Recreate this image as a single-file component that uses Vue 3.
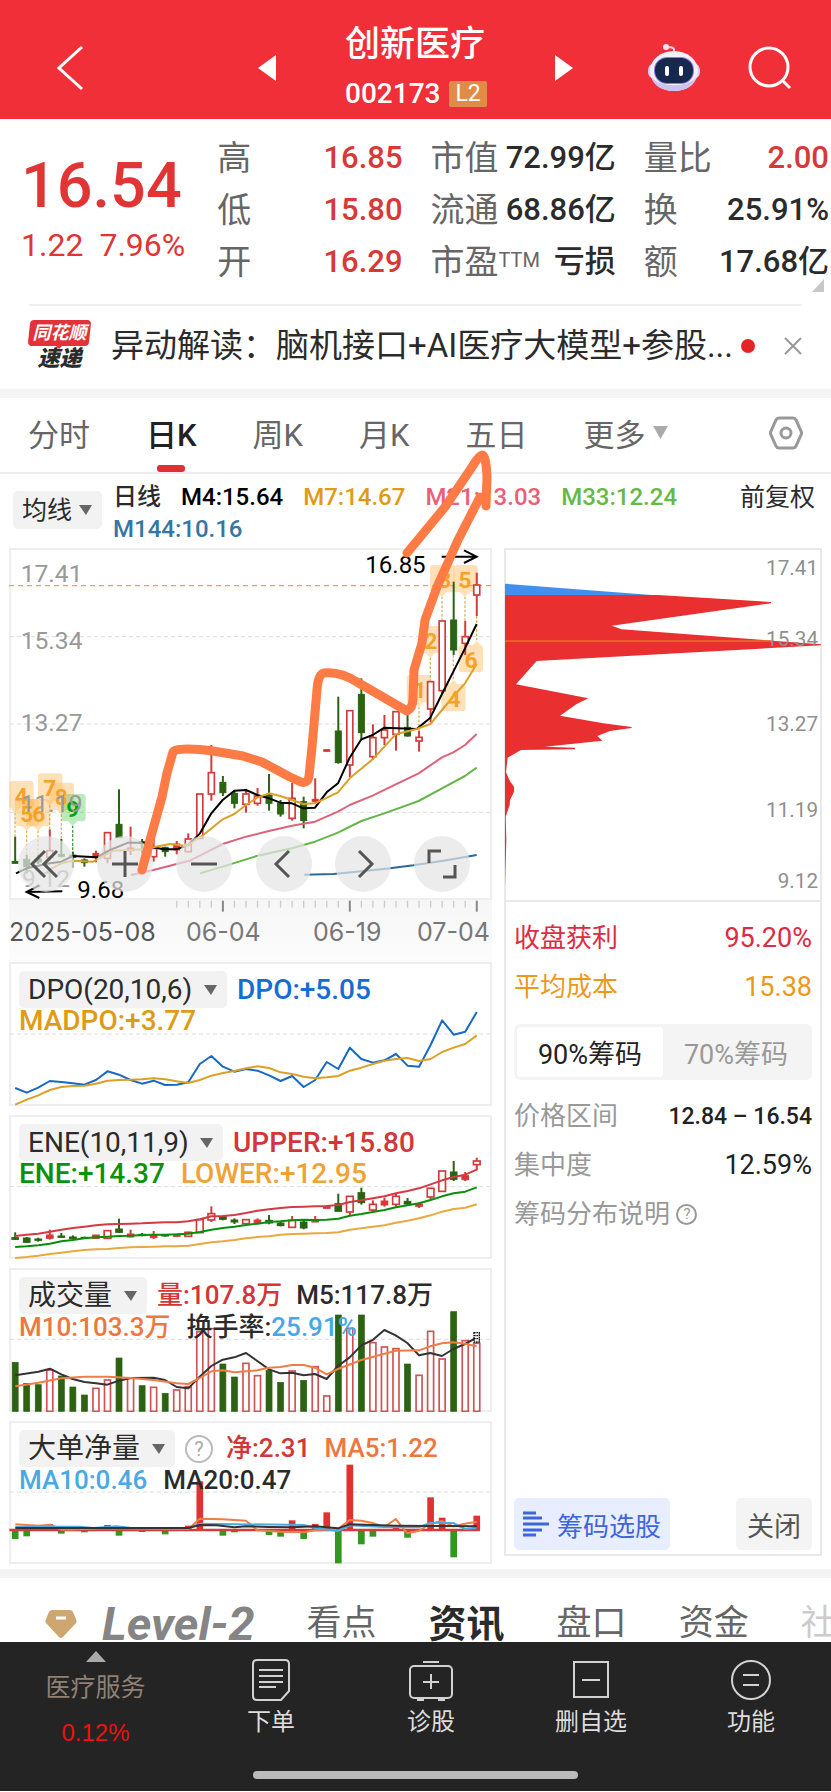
<script setup>
const STEP = 34.62
const X0 = 45.5
const cx = (i) => X0 + i * STEP

const line = (values) => values.map((y, i) => `${cx(i).toFixed(1)},${y}`).join(' ')

// kind: g = falling (filled green), h = rising (hollow red), r = small filled red
const toCandles = (rows) => rows.map(([kind, high, top, bottom, low], i) => ({
  kind, high, top, low, height: Math.max(bottom - top, 3), x: cx(i),
}))

const dayCandles = toCandles([
  ['g', 890, 964, 970, 970], ['g', 945, 958, 980, 1000], ['g', 945, 957, 966, 972], ['h', 868, 932, 952, 962],
  ['g', 897, 943, 949, 952], ['g', 935, 945, 952, 983], ['g', 955, 960, 968, 980], ['r', 932, 940, 953, 967],
  ['h', 878, 878, 955, 970], ['g', 748, 853, 893, 893], ['h', 860, 925, 931, 945], ['g', 897, 905, 911, 940],
  ['h', 880, 925, 950, 965], ['g', 920, 922, 935, 950], ['r', 903, 912, 930, 943], ['h', 880, 897, 935, 937],
  ['h', 762, 762, 895, 898], ['h', 615, 698, 762, 782], ['g', 708, 727, 758, 768], ['g', 750, 760, 790, 805],
  ['h', 750, 762, 793, 818], ['h', 744, 768, 790, 797], ['g', 702, 765, 790, 812], ['g', 780, 790, 822, 830],
  ['h', 728, 775, 835, 842], ['g', 770, 785, 842, 865], ['r', 715, 778, 784, 790], ['r', 629, 629, 634, 634],
  ['g', 470, 573, 668, 671], ['h', 512, 512, 675, 712], ['g', 415, 463, 578, 598], ['h', 553, 593, 650, 660],
  ['h', 525, 570, 593, 615], ['h', 515, 515, 583, 632], ['g', 525, 562, 588, 590], ['h', 572, 592, 603, 635],
  ['h', 425, 425, 507, 547], ['h', 243, 243, 452, 460], ['g', 125, 240, 330, 345], ['h', 243, 290, 310, 345],
  ['h', 98, 135, 165, 228],
])

const eneCandles = toCandles([
  ['g', 846, 862, 867, 868], ['g', 860, 863, 876, 877], ['g', 862, 866, 870, 874], ['r', 838, 854, 864, 868],
  ['g', 848, 857, 861, 862], ['g', 855, 860, 865, 868], ['g', 859, 861, 864, 865], ['r', 854, 854, 864, 864],
  ['h', 840, 841, 864, 866], ['g', 805, 836, 846, 847], ['r', 838, 851, 860, 861], ['g', 848, 852, 856, 858],
  ['r', 842, 855, 862, 866], ['g', 851, 853, 857, 859], ['r', 851, 852, 858, 859], ['h', 844, 846, 858, 860],
  ['h', 808, 808, 847, 848], ['h', 768, 790, 809, 815], ['g', 796, 799, 807, 810], ['g', 804, 809, 815, 821],
  ['h', 807, 808, 820, 824], ['r', 804, 809, 818, 821], ['g', 794, 810, 818, 822], ['g', 815, 818, 826, 828],
  ['h', 797, 810, 831, 832], ['g', 808, 815, 833, 837], ['r', 797, 810, 815, 816], ['r', 769, 769, 774, 774],
  ['g', 730, 760, 783, 783], ['h', 738, 738, 785, 797], ['g', 712, 727, 757, 763], ['h', 750, 762, 779, 782],
  ['r', 742, 752, 764, 769], ['h', 730, 738, 762, 770], ['g', 743, 753, 761, 763], ['r', 756, 761, 768, 773],
  ['h', 712, 714, 740, 748], ['h', 662, 662, 723, 725], ['g', 632, 665, 687, 692], ['r', 665, 676, 688, 692],
  ['h', 622, 632, 643, 660],
])

const averages = [
  { cls: 'pink', pts: '393,1005 460,990 530,972 570,962 668,912 738,890 810,872 876,857 945,845 1014,815 1049,795 1118,767 1187,733 1256,700 1326,652 1360,637 1395,615 1430,582' },
  { cls: 'lime', pts: '600,1000 700,970 770,948 876,925 945,905 1014,878 1084,843 1153,820 1256,783 1326,745 1395,708 1430,683' },
  { cls: 'navy', pts: '913,1004 1000,1002 1100,992 1170,985 1240,976 1330,962 1430,945' },
  { cls: 'black', pts: '48,1000 80,985 150,970 184,965 218,948 290,952 330,930 385,908 430,908 460,922 490,928 530,928 565,915 600,880 634,820 668,780 703,752 738,750 772,765 807,775 841,788 876,790 910,805 945,803 980,757 1014,730 1049,653 1084,598 1118,585 1153,563 1250,567 1291,533 1326,462 1360,395 1395,325 1430,252' },
  { cls: 'gold', pts: '150,988 184,970 218,962 280,965 340,932 430,928 460,922 510,912 560,918 610,885 668,838 703,822 738,795 772,773 807,760 841,768 910,792 945,790 1014,757 1049,715 1118,658 1187,583 1250,567 1291,552 1326,510 1360,470 1395,430 1430,372' },
]

const signals = [
  { n: 4, x: 28, y: 723, tip: 45, to: 890, tx: 64 },
  { n: 5, x: 45, y: 777, tip: 80, to: 950, tx: 80 },
  { n: 6, x: 78, y: 777, tip: 114, to: 955, tx: 116 },
  { n: 7, x: 114, y: 700, tip: 149, to: 868, tx: 149 },
  { n: 8, x: 149, y: 728, tip: 184, to: 897, tx: 184 },
  { n: 9, x: 184, y: 762, tip: 218, to: 940, tx: 218, green: true },
  { n: 1, x: 1220, y: 405, tip: 1257, to: 572, tx: 1260 },
  { n: 2, x: 1256, y: 258, tip: 1291, to: 425, tx: 1293 },
  { n: 3, x: 1290, y: 75, tip: 1326, to: 243, tx: 1334 },
  { n: 5, x: 1360, y: 75, tip: 1395, to: 243, tx: 1395 },
  { n: 4, x: 1324, y: 432, tip: 1360, to: 345, tx: 1362, up: true },
  { n: 6, x: 1376, y: 315, tip: 1430, to: 228, tx: 1413, up: true },
]
const tagPath = (s) => s.up
  ? `M${s.tip - 12} ${s.y} L${s.tip} ${s.y - 12} L${s.tip + 12} ${s.y} Z`
  : `M${s.tip - 14} ${s.y + 82} L${s.tip} ${s.y + 95} L${s.tip + 14} ${s.y + 82} Z`

const ticks = Array.from({ length: 27 }, (_, k) => {
  const i = k + 14
  return { x: cx(i), major: i === 18 || i === 29 || i === 40 }
})

const dpo = [412, 426, 411, 391, 394, 398, 402, 388, 362, 372, 388, 399, 390, 403, 402, 395, 340, 316, 348, 363, 355, 360, 374, 391, 376, 409, 388, 334, 355, 291, 325, 336, 329, 310, 345, 348, 283, 209, 252, 243, 184]
const madpo = [462, 447, 434, 418, 409, 406, 405, 399, 390, 388, 387, 386, 383, 386, 392, 397, 388, 375, 367, 361, 353, 347, 352, 365, 370, 378, 383, 380, 376, 360, 351, 340, 330, 325, 322, 331, 325, 304, 291, 280, 254]
const upper = [857, 853, 850, 844, 838, 833, 829, 825, 822, 821, 820, 819, 817, 816, 816, 813, 807, 798, 797, 794, 788, 781, 777, 773, 770, 769, 768, 767, 764, 755, 750, 744, 738, 729, 722, 714, 702, 690, 680, 673, 658]
const ene = [890, 888, 885, 880, 873, 869, 864, 861, 859, 857, 856, 854, 853, 853, 852, 850, 845, 838, 833, 829, 824, 820, 815, 813, 810, 808, 809, 808, 805, 796, 791, 785, 779, 771, 765, 759, 749, 738, 729, 724, 711]
const lower = [923, 920, 916, 911, 907, 903, 899, 897, 896, 893, 891, 890, 889, 888, 888, 886, 881, 876, 873, 869, 864, 860, 858, 853, 851, 850, 849, 848, 846, 838, 834, 829, 825, 817, 811, 804, 795, 784, 776, 772, 762]

const volTops = [307, 370, 374, 330, 348, 381, 405, 385, 360, 294, 355, 377, 382, 400, 390, 380, 215, 206, 312, 351, 310, 347, 331, 367, 333, 361, 320, 408, 165, 205, 165, 248, 261, 266, 312, 346, 214, 297, 155, 242, 250]
const volDown = new Set([0, 1, 2, 4, 5, 6, 9, 11, 13, 18, 19, 22, 23, 25, 28, 30, 34, 38])
const volumes = volTops.map((top, i) => ({ top, x: cx(i), down: volDown.has(i) }))

const flowIn = [[3, 793], [8, 796], [15, 798], [16, 665], [24, 782], [26, 793], [27, 758], [29, 615], [33, 800], [36, 713], [37, 774], [40, 768]]
const flowOut = [[0, 838], [1, 830], [4, 822], [6, 818], [9, 828], [11, 817], [13, 824], [18, 828], [19, 818], [22, 826], [23, 831], [25, 838], [28, 911], [30, 854], [31, 831], [34, 834], [38, 893]]

const quotes = [
  [['高', '16.85', 'up'], ['低', '15.80', 'up'], ['开', '16.29', 'up']],
  [['市值', '72.99亿'], ['流通', '68.86亿'], ['市盈', '亏损', '', 'TTM']],
  [['量比', '2.00', 'up'], ['换', '25.91%'], ['额', '17.68亿']],
]
const priceLabels = [['17.41', 125], ['15.34', 328], ['13.27', 573], ['11.19', 815]]
const chipLabels = [['17.41', 105], ['15.34', 318], ['13.27', 573], ['11.19', 830], ['9.12', 1045]]
</script>

<template>
  <div class="app">
    <header class="top">
      <button class="bare back" aria-label="返回"><svg width="27" height="46" viewBox="0 0 27 46"><path d="M25 2 2 23 25 44" fill="none" stroke="#fff" stroke-width="3" /></svg></button>
      <div class="switcher">
        <button class="bare" aria-label="上一只"><svg width="18" height="26" viewBox="0 0 18 26"><path d="M18 0V26L0 13Z" fill="#fff" /></svg></button>
        <div class="stock">
          <h1>创新医疗</h1>
          <p>002173 <span class="l2">L2</span></p>
        </div>
        <button class="bare" aria-label="下一只"><svg width="18" height="26" viewBox="0 0 18 26"><path d="M0 0V26L18 13Z" fill="#fff" /></svg></button>
      </div>
      <div class="tools">
        <button class="bare" aria-label="智能助手">
          <svg width="52" height="50" viewBox="0 0 52 50">
            <path d="M26 9C27 3 23 5 18 4" fill="none" stroke="#f3d9ee" stroke-width="2" /><circle cx="18" cy="4" r="3" fill="#fbe3f0" />
            <rect x="0" y="20" width="52" height="16" rx="7" fill="#d6cdf4" />
            <ellipse cx="26" cy="28" rx="24" ry="20" fill="#f3effc" /><path d="M4 34a22 14 0 0 0 44 0c-6 11-38 11-44 0" fill="#c9c4f0" />
            <rect x="6" y="14" width="40" height="27" rx="13" fill="#8b7be0" /><rect x="7" y="15" width="38" height="25" rx="12" fill="#17284e" />
            <rect x="17" y="23" width="4" height="10" rx="2" fill="#fff" /><rect x="31" y="23" width="4" height="10" rx="2" fill="#fff" />
          </svg>
        </button>
        <button class="bare" aria-label="搜索"><svg width="44" height="44" viewBox="0 0 44 44" fill="none" stroke="#fff" stroke-width="3"><circle cx="21" cy="21" r="19" /><path d="M34 34 42 42" /></svg></button>
      </div>
    </header>

    <section class="quote">
      <div class="price">
        <strong>16.54</strong>
        <p><span>1.22</span><span>7.96%</span></p>
      </div>
      <dl v-for="(col, c) in quotes" :key="c">
        <div v-for="q in col" :key="q[0]">
          <dt>{{ q[0] }}<sup v-if="q[3]">{{ q[3] }}</sup></dt>
          <dd :class="q[2]">{{ q[1] }}</dd>
        </div>
      </dl>
      <svg class="corner" width="12" height="13" viewBox="0 0 12 13"><path d="M12 0V13H0Z" fill="#c8c8c8" /></svg>
    </section>

    <section class="news">
      <div class="brand"><span>同花顺</span><b>速递</b></div>
      <a href="#">异动解读：脑机接口+AI医疗大模型+参股...</a>
      <i class="dot"></i>
      <button class="bare" aria-label="关闭提示"><svg width="18" height="18" viewBox="0 0 18 18"><path d="M1 1 17 17M17 1 1 17" stroke="#999" stroke-width="2" /></svg></button>
    </section>

    <main class="charts">
      <nav class="periods">
        <button class="bare">分时</button>
        <button class="bare active">日K</button>
        <button class="bare">周K</button>
        <button class="bare">月K</button>
        <button class="bare">五日</button>
        <button class="bare more">更多<svg width="15" height="13" viewBox="0 0 16 14"><path d="M0 0H16L8 14Z" fill="#aaa" /></svg></button>
        <button class="bare gear" aria-label="设置"><svg width="34" height="34" viewBox="0 0 34 34" fill="none" stroke="#999" stroke-width="3"><path d="M10 2H24Q26 2 27 4L32 15Q33 17 32 19L27 30Q26 32 24 32H10Q8 32 7 30L2 19Q1 17 2 15L7 4Q8 2 10 2Z" /><circle cx="17" cy="17" r="5" /></svg></button>
      </nav>

      <div class="averages">
        <label class="picker"><select aria-label="主图指标"><option>均线</option></select><svg width="13" height="10" viewBox="0 0 13 10"><path d="M0 0H13L7 10Z" fill="#666" /></svg></label>
        <p class="legend">
          <span>日线</span><span class="k">M4:15.64</span><span class="y">M7:14.67</span><span class="p">M21:13.03</span><span class="l">M33:12.24</span><span class="n">M144:10.16</span>
        </p>
        <button class="bare adjust">前复权</button>
      </div>

      <div class="board">
        <div class="left">
          <div class="stage">
            <svg class="plot" viewBox="27 24 1449 1056" role="img" aria-label="日K线">
              <g class="grid"><path d="M30 290H1475M30 552H1475M30 817H1475" /><path class="now" d="M27 137H1475" /></g>
              <g v-for="(s, i) in signals" :key="'s' + i" :class="s.green ? 'sig grn' : 'sig'">
                <path class="thread" :d="s.up ? `M${s.tip} ${s.to}V${s.y - 12}` : `M${s.tip} ${s.y + 95}V${s.to}`" />
                <rect :x="s.x" :y="s.y" width="73" height="82" rx="10" /><path :d="tagPath(s)" />
              </g>
              <g v-for="(c, i) in dayCandles" :key="i" :class="c.kind">
                <path :d="`M${c.x} ${c.high}V${c.low}`" /><rect :x="c.x - 9" :y="c.top" width="18" :height="c.height" />
              </g>
              <polyline v-for="a in averages" :key="a.cls" class="ln" :class="a.cls" :points="a.pts" />
              <text v-for="(s, i) in signals" :key="'t' + i" class="num" :class="{ grnt: s.green }" :x="s.tx" :y="s.y + 68" text-anchor="middle">{{ s.n }}</text>
              <text v-for="p in priceLabels" :key="p[0]" class="axis" x="62" :y="p[1]">{{ p[0] }}</text>
              <text class="axis" x="66" y="1040">9.12</text>
              <text class="mark" x="232" y="1075">9.68</text><text class="mark" x="1096" y="98">16.85</text>
              <path class="arrow" d="M187 1054 80 1056M118 1036 80 1056 118 1074M1325 50H1430M1392 31 1430 50 1392 69" />
            </svg>
            <div class="controls">
              <button aria-label="最早"><svg viewBox="0 0 56 56"><path d="M27 15 14 28 27 41M39 15 26 28 39 41" /></svg></button>
              <button aria-label="放大"><svg viewBox="0 0 56 56"><path d="M15 28H41M28 15V41" /></svg></button>
              <button aria-label="缩小"><svg viewBox="0 0 56 56"><path d="M15 28H41" /></svg></button>
              <button aria-label="向左"><svg viewBox="0 0 56 56"><path d="M33 15 20 28 33 41" /></svg></button>
              <button aria-label="向右"><svg viewBox="0 0 56 56"><path d="M24 15 37 28 24 41" /></svg></button>
              <button aria-label="全屏"><svg viewBox="0 0 56 56"><path d="M15 27V15H27M29 41H41V29" /></svg></button>
            </div>
          </div>

          <div class="dates">
            <svg viewBox="27 0 1449 36"><path v-for="t in ticks" :key="t.x" :d="`M${t.x} 2V${t.major ? 35 : 23}`" :class="{ major: t.major }" /></svg>
            <p><time>2025-05-08</time><time>06-04</time><time>06-19</time><time>07-04</time></p>
          </div>

          <section class="panel">
            <svg class="plot" viewBox="27 34 1449 432">
              <path class="guide" d="M30 250H1475" />
              <polyline class="ln dpo" :points="line(dpo)" /><polyline class="ln gold" :points="line(madpo)" />
            </svg>
            <div class="caption">
              <label class="picker"><select aria-label="副图指标一"><option>DPO(20,10,6)</option></select><svg width="13" height="10" viewBox="0 0 13 10"><path d="M0 0H13L7 10Z" fill="#666" /></svg></label>
              <span class="b">DPO:+5.05</span>
              <p><span class="y">MADPO:+3.77</span></p>
            </div>
          </section>

          <section class="panel">
            <svg class="plot" viewBox="27 494 1449 432">
              <path class="guide" d="M30 709H1475" />
              <g v-for="(c, i) in eneCandles" :key="i" :class="c.kind">
                <path :d="`M${c.x} ${c.high}V${c.low}`" /><rect :x="c.x - 10" :y="c.top" width="20" :height="c.height" />
              </g>
              <polyline class="ln crimson" :points="line(upper)" /><polyline class="ln leaf" :points="line(ene)" /><polyline class="ln amber" :points="line(lower)" />
            </svg>
            <div class="caption">
              <label class="picker"><select aria-label="副图指标二"><option>ENE(10,11,9)</option></select><svg width="13" height="10" viewBox="0 0 13 10"><path d="M0 0H13L7 10Z" fill="#666" /></svg></label>
              <span class="r1">UPPER:+15.80</span>
              <p><span class="g1">ENE:+14.37</span><span class="a1">LOWER:+12.95</span></p>
            </div>
          </section>

          <section class="panel cjk">
            <svg class="plot" viewBox="27 24 1449 432">
              <path class="guide" d="M30 238H1475" />
              <rect v-for="v in volumes" :key="v.x" :class="v.down ? 'vd' : 'vu'" :x="v.x - 9" :y="v.top" width="18" :height="454 - v.top" />
              <polyline class="ln ink" points="46,346 115,335 150,326 184,343 218,357 253,366 288,370 322,374 357,362 392,354 461,353 495,360 530,381 565,385 599,350 634,318 668,299 703,292 738,279 772,303 807,328 841,340 876,338 911,346 945,342 980,357 1014,318 1049,292 1084,256 1118,240 1153,210 1187,226 1222,249 1257,286 1291,279 1326,288 1360,267 1395,252 1430,233" />
              <polyline class="ln orange" points="46,379 115,368 184,355 253,350 322,350 392,354 461,360 530,370 565,372 599,354 634,334 668,331 703,337 772,331 807,323 841,321 876,315 911,315 945,323 980,343 1014,327 1084,300 1187,272 1257,271 1291,259 1326,250 1360,247 1395,251 1430,259" />
              <path d="M1422 218H1438V246H1422ZM1422 227H1438M1422 236H1438" fill="#fff" stroke="#111" stroke-width="4" stroke-dasharray="5 2" />
            </svg>
            <div class="caption">
              <label class="picker"><select aria-label="副图指标三"><option>成交量</option></select><svg width="13" height="10" viewBox="0 0 13 10"><path d="M0 0H13L7 10Z" fill="#666" /></svg></label>
              <span class="r1">量:107.8万</span><span>M5:117.8万</span>
              <p><span class="o1">M10:103.3万</span><span>换手率:<em>25.91%</em></span></p>
            </div>
          </section>

          <section class="panel cjk">
            <svg class="plot" viewBox="27 484 1449 430">
              <path class="guide" d="M30 697H1475" />
              <rect v-for="f in flowIn" :key="'i' + f[0]" class="fi" :x="cx(f[0]) - 10" :y="f[1]" width="20" :height="811 - f[1]" />
              <rect v-for="f in flowOut" :key="'o' + f[0]" class="fo" :x="cx(f[0]) - 10" y="811" width="20" :height="f[1] - 811" />
              <path d="M28 811H1440" stroke="#d83a3a" stroke-width="7" />
              <polyline class="ln orange" points="46,794 115,798 150,795 184,810 253,808 322,806 565,808 599,777 668,779 738,783 772,812 841,816 911,818 945,812 1014,808 1049,781 1084,783 1118,790 1153,802 1187,778 1222,821 1257,813 1291,793 1326,784 1360,800 1395,792 1430,786" />
              <polyline class="ln sky" points="46,801 240,801 280,805 350,800 400,806 565,806 599,792 911,796 945,805 1014,814 1049,797 1153,802 1257,803 1291,789 1360,790 1395,808 1430,804" />
              <polyline class="ln ink" points="46,805 565,805 599,796 650,797 703,803 738,800 807,802 876,803 945,800 1014,806 1049,794 1187,798 1430,800" />
            </svg>
            <div class="caption">
              <label class="picker"><select aria-label="副图指标四"><option>大单净量</option></select><svg width="13" height="10" viewBox="0 0 13 10"><path d="M0 0H13L7 10Z" fill="#666" /></svg></label>
              <button class="bare help" aria-label="指标说明">?</button>
              <span class="r1">净:2.31</span><span class="o1">MA5:1.22</span>
              <p><span class="s1">MA10:0.46</span><span>MA20:0.47</span></p>
            </div>
          </section>
        </div>

        <aside class="chips">
          <svg class="plot" viewBox="27 24 954 1056" role="img" aria-label="筹码分布">
            <path d="M30 131 480 166H30Z" fill="#438fee" />
            <path d="M30 165H490L828 186V190L350 257 380 268 978 313V316L125 363 63 433 280 475 245 492 195 527 325 550 410 561V564L345 573 307 588 322 602 150 620 240 623V628L78 630 38 653 33 697 45 724 57 740V755L45 780 44 795 32 830 34 900 30 1040Z" fill="#e92f30" />
            <path d="M30 303H830" stroke="#ee6a2c" stroke-width="4" />
            <text v-for="c in chipLabels" :key="c[0]" x="969" :y="c[1]" text-anchor="end">{{ c[0] }}</text>
          </svg>
          <div class="info">
            <div class="row red"><span>收盘获利</span><b>95.20%</b></div>
            <div class="row gold-t"><span>平均成本</span><b>15.38</b></div>
            <div class="segment"><button class="bare on">90%筹码</button><button class="bare">70%筹码</button></div>
            <div class="row"><span>价格区间</span><b class="range">12.84 – 16.54</b></div>
            <div class="row"><span>集中度</span><b>12.59%</b></div>
            <div class="row"><span>筹码分布说明 <button class="bare help small" aria-label="筹码说明">?</button></span></div>
          </div>
          <div class="actions">
            <button class="pick"><svg width="26" height="26" viewBox="0 0 26 26" stroke="#3e66dc" stroke-width="3"><path d="M0 2H13M0 7H19M0 13H26M0 19H19M0 24H13" /></svg>筹码选股</button>
            <button class="close">关闭</button>
          </div>
        </aside>
      </div>

      <svg class="drawing" viewBox="0 398 831 1172"><path d="M142 870 150 840 162 797 167 773 173 752Q174 749 187 749 200 749 213 751L243 756 262 762 290 777 301 782Q308 784 309 776L312 747 317 690Q318 674 324 673 340 671 357 682L407 711Q413 708 413 698L414 670 422 643 425 620 437 587 458 540 480 497M486 506 487 477Q486 455 482 455 479 455 472 467L445 507 407 553" /></svg>
    </main>

    <nav class="topics">
      <a href="#" class="level"><svg width="32" height="28" viewBox="0 0 32 28"><path d="M7 0H25Q27 0 28 2L31 9Q32 11 31 13L18 27Q16 29 14 27L1 13Q0 11 1 9L4 2Q5 0 7 0Z" fill="#cfa670" /><path d="M11 8H21" stroke="#fff" stroke-width="3" /></svg><i>Level-2</i></a>
      <a href="#">看点</a><a href="#" class="cur">资讯</a><a href="#">盘口</a><a href="#">资金</a><a href="#" class="fade">社</a>
    </nav>

    <footer class="dock">
      <div class="items">
        <a href="#" class="sector"><svg width="20" height="11" viewBox="0 0 20 11"><path d="M10 0 20 11H0Z" fill="#aaa" /></svg><span>医疗服务</span><b>0.12%</b></a>
        <a href="#"><svg width="44" height="42" viewBox="0 0 44 42"><path d="M8 1H36Q40 1 40 5V32L32 41H8Q4 41 4 37V5Q4 1 8 1ZM10 11H34M10 17H34M10 23H34M10 28H27" /></svg>下单</a>
        <a href="#"><svg width="44" height="42" viewBox="0 0 44 42"><rect x="1" y="7" width="42" height="32" rx="4" /><path d="M14 3H30M22 15V30M14 23H30M8 41H15M29 41H36" /></svg>诊股</a>
        <a href="#"><svg width="44" height="42" viewBox="0 0 44 42"><rect x="5" y="3" width="34" height="35" /><path d="M13 21H31" /></svg>删自选</a>
        <a href="#"><svg width="44" height="42" viewBox="0 0 44 42"><circle cx="22" cy="21" r="19" /><path d="M14 16H30M14 26H30" /></svg>功能</a>
      </div>
      <div class="home"></div>
    </footer>
  </div>
</template>

<style>
body { margin: 0; background: #fff; }
</style>

<style scoped>
* { box-sizing: border-box; }
.app { font-family: Roboto, "Noto Sans CJK SC", sans-serif; color: #2b2b2b; background: #fff; overflow: hidden; }
h1, p, dl, dd { margin: 0; }
svg { display: block; flex: none; }
a { color: inherit; text-decoration: none; }
i, em { font-style: normal; }
button, select { font-family: inherit; color: inherit; }
.bare { border: 0; padding: 0; background: none; font-size: inherit; }

.top { display: grid; grid-template-columns: 1fr auto 1fr; align-items: center; height: 119px; padding: 16px 39px 0; background: #f12f38; color: #fff; }
.back { justify-self: start; margin-left: 18px; }
.switcher { display: flex; align-items: center; gap: 69px; }
.stock { width: 141px; }
.stock h1 { font-size: 35px; line-height: 52px; font-weight: 500; white-space: nowrap; }
.stock p { display: flex; align-items: center; gap: 9px; font-size: 28px; line-height: 46px; font-weight: 500; }
.l2 { padding: 0 6px; background: #e28b47; border-radius: 2px; font-size: 23px; line-height: 26px; font-weight: 400; }
.tools { display: flex; justify-content: flex-end; align-items: center; gap: 48px; }

.quote { position: relative; display: grid; grid-template-columns: 189fr 185fr 185fr 185fr; column-gap: 28px; padding: 13px 2px 16px 0; }
.price { color: #e13435; padding: 20px 0 0 21px; white-space: nowrap; }
.price strong { display: block; font-size: 63px; line-height: 68px; font-weight: 500; }
.price p { display: flex; gap: 16px; font-size: 32px; line-height: 50px; }
.quote dl > div { display: flex; justify-content: space-between; font-size: 31px; line-height: 52px; white-space: nowrap; }
.quote dt { font-size: 34px; color: #666; }
.quote dd { font-weight: 500; }
.quote dd.up { color: #d93838; }
.quote sup { font-size: 20px; line-height: 20px; vertical-align: 7px; }
.corner { position: absolute; right: 7px; bottom: 12px; }

.news { display: flex; align-items: center; height: 85px; margin: 0 29px; padding-bottom: 3px; border-top: 2px solid #f0f0f0; }
.brand { width: 62px; margin-right: 21px; font-style: italic; text-align: center; }
.brand span { display: block; position: relative; z-index: 0; color: #fff; font-size: 18px; line-height: 26px; font-weight: 700; }
.brand span::before { content: ""; position: absolute; z-index: -1; inset: 0; border-radius: 4px; background: #e3323a; transform: skewX(-6deg); }
.brand span::after { content: ""; position: absolute; left: 50%; top: 25px; margin-left: -4px; border: 4px solid transparent; border-top-color: #e3323a; }
.brand b { display: block; font-size: 22px; line-height: 26px; font-weight: 900; }
.news a { flex: 1; font-size: 33px; line-height: 48px; white-space: nowrap; }
.dot { width: 14px; height: 14px; margin: 0 29px 0 8px; border-radius: 50%; background: #e42525; flex: none; }

.charts { position: relative; border-top: 9px solid #f4f4f4; border-bottom: 9px solid #f4f4f4; padding-bottom: 5px; }
.periods { display: flex; align-items: stretch; height: 76px; padding: 0 28px; gap: 56px; border-bottom: 2px solid #eee; font-size: 31px; color: #666; }
.periods button { padding-bottom: 5px; }
.periods .active { color: #222; font-weight: 500; position: relative; }
.periods .active::after { content: ""; position: absolute; left: 50%; bottom: 0; width: 28px; height: 7px; margin-left: -14px; border-radius: 3px; background: #e22f33; }
.more { display: flex; align-items: center; gap: 7px; }
.gear { margin-left: auto; }

.averages { display: flex; align-items: flex-start; height: 74px; padding: 7px 16px 0 13px; }
.picker { position: relative; display: inline-flex; align-items: center; background: #f2f2f2; border-radius: 5px; }
.picker select { appearance: none; border: 0; margin: 0; padding: 0 32px 0 9px; height: 38px; background: none; font-size: 25px; color: #2b2b2b; }
.picker svg { position: absolute; right: 10px; pointer-events: none; }
.averages .picker { margin: 10px 11px 0 0; }
.averages .picker select { padding-right: 29px; }
.legend { flex: 1; display: flex; flex-wrap: wrap; column-gap: 20px; font-size: 24px; line-height: 32px; font-weight: 500; }
.adjust { font-size: 25px; line-height: 34px; }
.k { color: #000; } .y { color: #df9b16; } .p { color: #ea6078; } .l { color: #67b945; } .n { color: #3576a4; }

.board { display: grid; grid-template-columns: 483fr 318fr; column-gap: 12px; padding: 0 9px; }
.left { min-width: 0; }
.stage { position: relative; box-shadow: inset 0 0 0 2px #eee; }
.plot { width: 100%; height: auto; }
.grid path, .guide { fill: none; stroke: #ddd; stroke-width: 3; stroke-dasharray: 12 9; }
.grid .now { stroke: #cda976; stroke-width: 4; stroke-dasharray: 15 12; }
.g path { stroke: #2b6314; stroke-width: 6; } .g rect { fill: #2b6314; stroke: #2b6314; stroke-width: 3; }
.h path, .r path { stroke: #d03b3b; stroke-width: 6; } .h rect { fill: #fff; stroke: #d03b3b; stroke-width: 5; } .r rect { fill: #e63131; stroke: #d03b3b; stroke-width: 3; }
.ln { fill: none; stroke-width: 6; stroke-linejoin: round; }
.pink { stroke: #dc637a; } .lime { stroke: #65b64a; } .navy { stroke: #2a6a9d; } .black { stroke: #000; } .gold { stroke: #dba027; }
.dpo { stroke: #1769c5; } .crimson { stroke: #d23a44; } .leaf { stroke: #078f0c; } .amber { stroke: #eaa840; } .ink { stroke: #333; } .orange { stroke: #ef7d46; } .sky { stroke: #4eaae2; }
.sig rect, .sig path { fill: #ffb145; fill-opacity: .38; }
.sig .thread { fill: none; stroke: #d9b65c; stroke-width: 4; stroke-dasharray: 8 5; }
.grn rect, .grn path { fill: #4cc94c; } .grn .thread { stroke: #3c993c; }
.num { font-size: 68px; font-weight: 700; fill: #f5a22b; } .grnt { fill: #079f07; }
.axis { font-size: 74px; fill: #999; } .mark { font-size: 72px; fill: #000; }
.arrow { fill: none; stroke: #000; stroke-width: 6; }
.controls { position: absolute; left: 9px; right: 22px; bottom: 8px; display: flex; justify-content: space-between; }
.controls button { width: 56px; height: 56px; border: 0; padding: 0; border-radius: 50%; background: rgba(228, 228, 228, .72); }
.controls path { fill: none; stroke: #555; stroke-width: 3; }

.dates { height: 62px; background: linear-gradient(#f6f6f6, #fcfcfc); }
.dates svg { width: 100%; }
.dates path { stroke: #ccc; stroke-width: 4; } .dates path.major { stroke: #888; stroke-width: 6; }
.dates p { display: grid; grid-template-columns: 177fr 127fr 104fr 75fr; font: 25px/40px Inter, sans-serif; color: #777; white-space: nowrap; }
.dates time:first-child { color: #555; }

.panel { display: grid; box-shadow: inset 0 0 0 2px #eee; margin-bottom: 9px; }
.panel:last-child { margin-bottom: 0; }
.panel > * { grid-area: 1 / 1; }
.caption { padding: 9px 10px 0; font-size: 28px; line-height: 31px; font-weight: 500; white-space: nowrap; display: flex; flex-wrap: wrap; align-content: flex-start; align-items: center; column-gap: 10px; z-index: 1; }
.caption .picker select { height: 37px; padding-right: 34px; font-size: 28px; font-weight: 400; }
.caption p { flex-basis: 100%; display: flex; gap: 16px; line-height: 26px; }
.cjk .caption { font-size: 26px; }
.cjk .caption > span + span { margin-left: 4px; }
.caption em { color: #47a8e5; }
.b { color: #156dd3; } .r1 { color: #d23637; } .g1 { color: #0a920a; } .a1 { color: #f0a334; } .o1 { color: #ee7740; } .s1 { color: #48a9e5; }
.vd { fill: #2c6212; stroke: #2c6212; stroke-width: 2; } .vu { fill: #fff; stroke: #cf5354; stroke-width: 5; }
.fi { fill: #e13131; } .fo { fill: #32971d; }
.help { width: 28px; height: 28px; border: 2px solid #bbb; border-radius: 50%; color: #aaa; font-size: 20px; line-height: 22px; }
.help.small { width: 21px; height: 21px; font-size: 15px; line-height: 16px; vertical-align: 4px; color: #999; border-color: #999; }
.caption .help + span { margin-left: 3px; }

.chips { display: flex; flex-direction: column; box-shadow: inset 0 0 0 2px #e9e9e9; margin-bottom: 8px; }
.chips .plot { border-bottom: 2px solid #e9e9e9; }
.chips text { font-size: 62px; fill: #8f8f8f; }
.info { padding: 12px 10px 0; font-size: 26px; color: #999; }
.row { display: flex; justify-content: space-between; line-height: 49px; white-space: nowrap; }
.row b { font-weight: 400; color: #222; font-size: 27px; }
.row b.range { font-weight: 500; font-size: 23px; }
.row.red, .row.red b { color: #dc2b42; } .row.gold-t, .row.gold-t b { color: #ec981c; }
.segment { display: grid; grid-template-columns: 1fr 1fr; padding: 3px; margin: 12px 0; height: 56px; border-radius: 6px; background: #f4f4f4; font-size: 27px; }
.segment .on { background: #fff; color: #222; border-radius: 4px; }
.actions { display: flex; justify-content: space-between; margin-top: auto; padding: 0 10px 6px; }
.actions button { height: 52px; border: 0; border-radius: 5px; font-size: 26px; white-space: nowrap; }
.pick { display: flex; align-items: center; gap: 8px; padding: 0 9px; background: #e8edff; color: #3e66dc; }
.actions .close { padding: 0 11px; background: #f4f4f4; color: #555; font-size: 27px; }

.drawing { position: absolute; left: 0; top: 0; width: 100%; pointer-events: none; }
.drawing path { fill: none; stroke: #ff7b45; stroke-width: 9; stroke-linecap: round; stroke-linejoin: round; }

.topics { display: flex; align-items: center; height: 64px; padding: 28px 0 0 45px; gap: 52px; font-size: 35px; line-height: 36px; color: #666; white-space: nowrap; }
.level { display: flex; align-items: center; gap: 25px; }
.level i { font-size: 47px; font-style: italic; font-weight: 700; color: #858585; }
.topics .cur { font-size: 38px; font-weight: 700; color: #2b2b2b; }
.topics .fade { color: #ccc; }

.dock { height: 149px; display: flex; flex-direction: column; justify-content: space-between; align-items: center; padding-bottom: 12px; background: #242424; color: #ddd; position: relative; }
.items { display: grid; grid-template-columns: 191fr 160fr 160fr 160fr 160fr; width: 100%; font-size: 24px; }
.items a { display: flex; flex-direction: column; align-items: center; padding-top: 17px; line-height: 42px; }
.items a:not(.sector) path, .items rect, .items circle { fill: none; stroke: #d2d2d2; stroke-width: 2; }
.items a.sector { padding-top: 9px; color: #8f8074; }
.sector span { line-height: 36px; margin-top: 8px; font-size: 25px; }
.sector b { font: 24px/36px "Liberation Sans", sans-serif; color: #ee1111; margin-top: 9px; }
.home { width: 39%; height: 8px; border-radius: 4px; background: #bbb; }
</style>
